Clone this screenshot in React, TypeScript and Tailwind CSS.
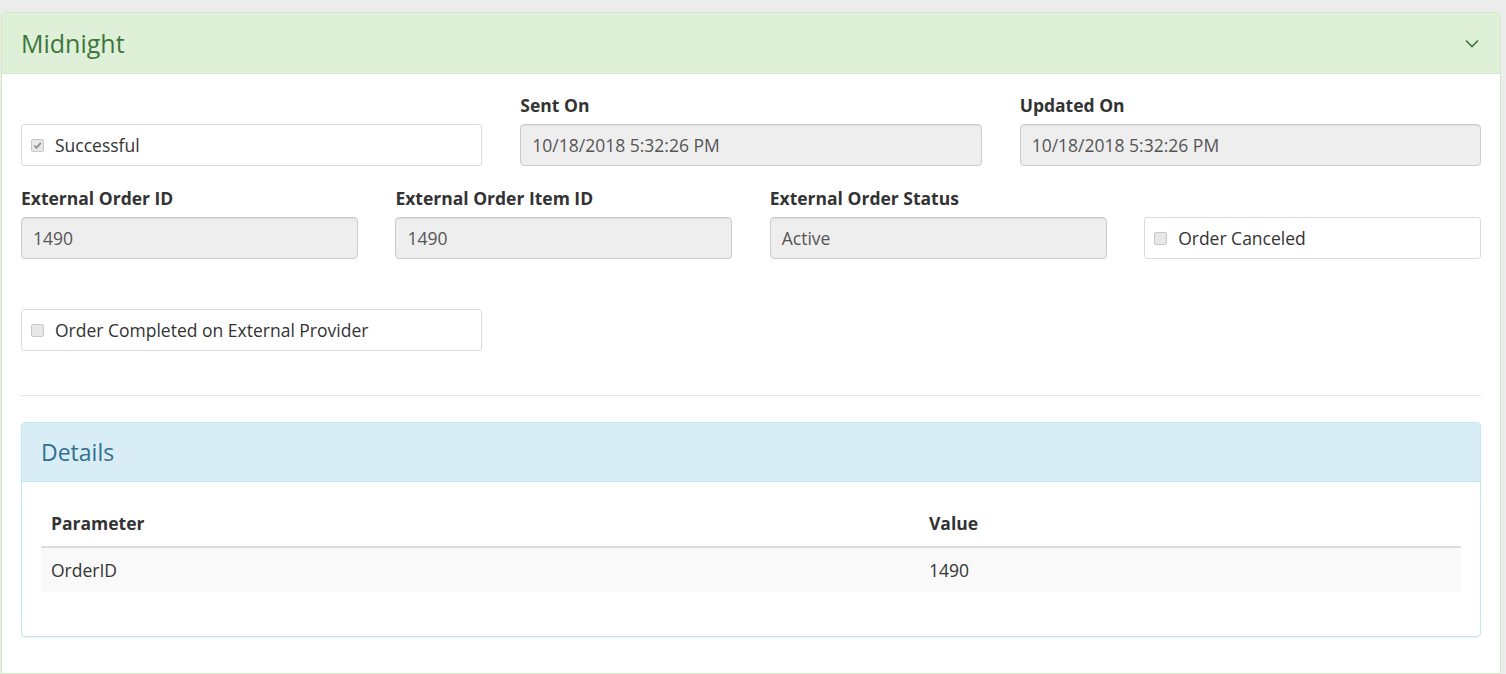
import React from 'react';

const font = { fontFamily: '"Open Sans", "Liberation Sans", sans-serif' };

const ReadOnlyInput: React.FC<{ value: string }> = ({ value }) => (
    <div className="h-[42px] flex items-center px-[11px] bg-[#eeeeee] border border-[#cccccc] rounded-[4px] shadow-[inset_0_1px_1px_rgba(0,0,0,0.075)] text-[17.5px] text-[#555555]">
        {value}
    </div>
);

const CheckBox: React.FC<{ label: string; checked?: boolean }> = ({ label, checked }) => (
    <div className="h-[42px] flex items-center px-[9px] border border-[#dddddd] rounded-[3px] bg-white">
        <div className="w-[13px] h-[13px] rounded-[2px] border border-[#c8c8c8] bg-[#e8e8e8] flex items-center justify-center">
            {checked && (
                <svg width="9" height="9" viewBox="0 0 9 9">
                    <path d="M1.2 4.6 L3.5 6.8 L7.8 1.8" fill="none" stroke="#8f8f8f" strokeWidth="1.8" />
                </svg>
            )}
        </div>
        <span className="ml-[11px] text-[17.5px] text-[#333333]">{label}</span>
    </div>
);

const Field: React.FC<{ label: string; value: string }> = ({ label, value }) => (
    <div>
        <div className="text-[17.5px] font-bold text-[#333333] leading-[22px] mb-[8px]">{label}</div>
        <ReadOnlyInput value={value} />
    </div>
);

const App: React.FC = () => {
    return (
        <div className="min-h-[674px] bg-[#ececec] pt-[12px] pl-[1px] pr-[5px]" style={font}>
            <div className="bg-white border border-[#d6e9c6] rounded-t-[4px] min-h-[662px]">
                <div className="h-[61px] bg-[#dff0d8] border-b border-[#d6e9c6] rounded-t-[3px] flex items-center justify-between pl-[19px] pr-[21px]">
                    <h2 className="text-[25px] text-[#3c763d] leading-none">Midnight</h2>
                    <svg width="14" height="9" viewBox="0 0 14 9">
                        <path d="M1 1.5 L7 7.5 L13 1.5" fill="none" stroke="#3c763d" strokeWidth="1.6" />
                    </svg>
                </div>
                <div className="px-[19px] pt-[20px]">
                    <div className="grid grid-cols-3 gap-x-[38px]">
                        <div className="pt-[30px]">
                            <CheckBox label="Successful" checked />
                        </div>
                        <Field label="Sent On" value="10/18/2018 5:32:26 PM" />
                        <Field label="Updated On" value="10/18/2018 5:32:26 PM" />
                    </div>
                    <div className="grid grid-cols-4 gap-x-[37.5px] mt-[21px]">
                        <Field label="External Order ID" value="1490" />
                        <Field label="External Order Item ID" value="1490" />
                        <Field label="External Order Status" value="Active" />
                        <div className="pt-[30px]">
                            <CheckBox label="Order Canceled" />
                        </div>
                    </div>
                    <div className="grid grid-cols-3 gap-x-[38px] mt-[50px]">
                        <CheckBox label="Order Completed on External Provider" />
                    </div>
                    <hr className="mt-[44px] border-t border-[#e5e5e5]" />
                    <div className="mt-[26px] border border-[#bce8f1] rounded-[4px] shadow-[0_1px_1px_rgba(0,0,0,0.05)]">
                        <div className="h-[59px] bg-[#d9edf7] border-b border-[#bce8f1] rounded-t-[3px] flex items-center px-[19px]">
                            <h3 className="text-[23px] text-[#31708f] leading-none">Details</h3>
                        </div>
                        <div className="px-[19px] pt-[20px] pb-[44px]">
                            <table className="w-full border-collapse text-[17.5px] text-[#333333]">
                                <thead>
                                    <tr className="border-b-2 border-[#dddddd]">
                                        <th className="w-[878px] text-left font-bold px-[10px] pt-[8px] pb-[10px]">Parameter</th>
                                        <th className="text-left font-bold px-[10px] pt-[8px] pb-[10px]">Value</th>
                                    </tr>
                                </thead>
                                <tbody>
                                    <tr className="bg-[#f9f9f9]">
                                        <td className="px-[10px] h-[45px]">OrderID</td>
                                        <td className="px-[10px] h-[45px]">1490</td>
                                    </tr>
                                </tbody>
                            </table>
                        </div>
                    </div>
                </div>
            </div>
        </div>
    );
};

export default App;
